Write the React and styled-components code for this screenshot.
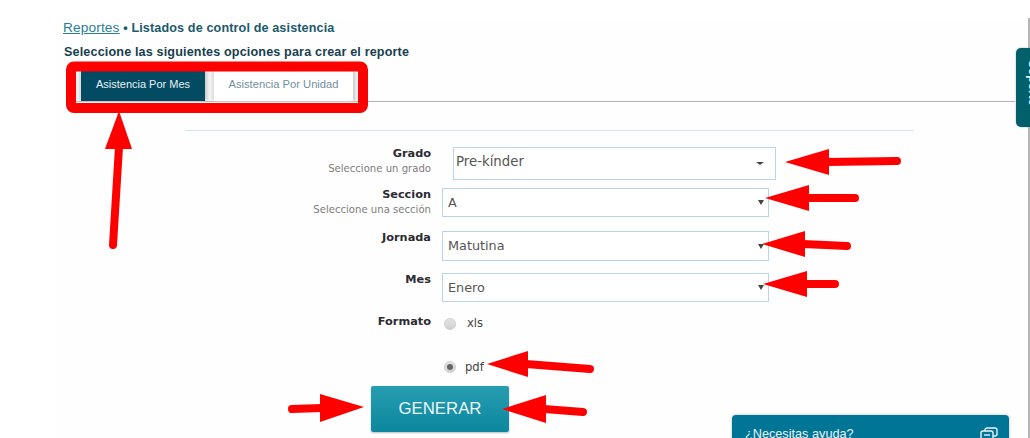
import React from "react";
import styled, { createGlobalStyle } from "styled-components";

const Global = createGlobalStyle`
  html, body {
    margin: 0;
    padding: 0;
    background: #fff;
    overflow: hidden;
  }
`;

const Page = styled.div`
  position: relative;
  width: 1030px;
  height: 438px;
  padding-top: 18px;
  box-sizing: border-box;
  overflow: hidden;
  background: #fff;
`;
const Panel = styled.div`
  margin-left: 55px;
  height: 420px;
  background: #fefefe;
  border-right: 2px solid #b5b5b5;
  box-sizing: border-box;
`;
const Head = styled.div`
  padding: 2px 0 0 8px;
`;
const Crumbs = styled.div`
  font: bold 12.6px/15px "Liberation Sans", Arial, sans-serif;
  color: #1b5a6b;
  letter-spacing: 0.13px;
  a {
    color: #2b7f92;
    font-weight: normal;
    font-size: 13.7px;
    text-decoration: underline;
  }
`;
const Lead = styled.div`
  margin: 9px 0 0 1px;
  font: bold 12.6px/15px "Liberation Sans", Arial, sans-serif;
  color: #173f50;
  letter-spacing: 0.15px;
`;
const TabBar = styled.div`
  display: flex;
  height: 30px;
  margin: 11px 13px 0 20px;
  border-bottom: 1px solid #b3b3b3;
  box-sizing: content-box;
`;
const Tab = styled.div`
  width: ${(p) => p.$w}px;
  margin-left: ${(p) => p.$gap}px;
  height: 30px;
  padding-bottom: 4px;
  box-sizing: border-box;
  display: flex;
  align-items: center;
  justify-content: center;
  font: ${(p) => (p.$on ? 11 : 11.2)}px "Liberation Sans", Arial, sans-serif;
  color: ${(p) => (p.$on ? "#e8f0f3" : "#6f8f9e")};
  background: ${(p) => (p.$on ? "#024b63" : "#fff")};
  box-shadow: 3px 0 3px #cfcfcf, -3px 0 3px #dedede;
`;
const Form = styled.div`
  width: 729px;
  margin: 28px 0 0 130px;
  border-top: 1px solid #cfe5ee;
  padding-top: 16px;
`;
const Row = styled.div`
  display: flex;
  height: ${(p) => p.$h}px;
`;
const Label = styled.div`
  width: 246px;
  text-align: right;
  font: bold 11.3px/14px "DejaVu Sans", Verdana, sans-serif;
  color: #2b2b33;
  padding-top: ${(p) => p.$top || 0}px;
  small {
    display: block;
    font: 10.1px/13px "DejaVu Sans", Verdana, sans-serif;
    color: #7d7d7d;
    margin-top: 1px;
  }
`;
const Field = styled.div`
  width: ${(p) => p.$w}px;
  height: ${(p) => p.$h}px;
  margin-left: ${(p) => p.$left}px;
  border: 1px solid #b7d7e8;
  box-sizing: border-box;
  display: flex;
  align-items: center;
  justify-content: space-between;
  padding: 0 ${(p) => p.$pr}px 0 ${(p) => p.$pl}px;
  background: #fff;
  font: ${(p) => p.$fs}px "DejaVu Sans", Verdana, sans-serif;
  color: #555;
`;
const Value = styled.span`
  margin-bottom: ${(p) => p.$lift || 0}px;
`;
const Caret = styled.span`
  width: 0;
  height: 0;
  border-left: ${(p) => p.$s}px solid transparent;
  border-right: ${(p) => p.$s}px solid transparent;
  border-top: ${(p) => p.$h}px solid #444;
`;
const Radio = styled.span`
  width: 12px;
  height: 12px;
  margin-left: 13px;
  margin-top: ${(p) => p.$top}px;
  border-radius: 50%;
  border: 1px solid #cfcfcf;
  background: linear-gradient(#e3e3e3, #d2d2d2);
  box-sizing: border-box;
  display: flex;
  align-items: center;
  justify-content: center;
  &::after {
    content: "";
    width: 6px;
    height: 6px;
    border-radius: 50%;
    background: ${(p) => (p.$on ? "#666" : "transparent")};
  }
`;
const RadioText = styled.span`
  margin-left: ${(p) => p.$left}px;
  margin-top: ${(p) => p.$top}px;
  font: 11.6px/16px "DejaVu Sans", Verdana, sans-serif;
  color: #444;
`;
const ButtonRow = styled.div`
  padding-left: 186px;
`;
const Generate = styled.button`
  width: 138px;
  height: 46px;
  border: none;
  border-radius: 2px;
  background: linear-gradient(#279db1, #0c879e);
  color: #eef7f9;
  font: 16.8px "Liberation Sans", Arial, sans-serif;
  box-shadow: 0 1px 2px #bbb;
`;
const Chat = styled.div`
  position: absolute;
  left: 732px;
  top: 415px;
  width: 277px;
  height: 40px;
  background: #017595;
  border-radius: 4px 4px 0 0;
  color: #e9f3f6;
  font: 12.7px "Liberation Sans", Arial, sans-serif;
  display: flex;
  justify-content: space-between;
  padding: 12px 11px 0 13px;
  box-sizing: border-box;
  box-shadow: 0 0 3px #bbb;
`;
const SideTab = styled.div`
  position: absolute;
  left: 1016px;
  top: 48px;
  width: 14px;
  height: 79px;
  background: #01606a;
  border-radius: 5px 0 0 5px;
  box-shadow: 0 0 2px #aaa;
  overflow: hidden;
`;
const SideLabel = styled.div`
  position: absolute;
  left: 7px;
  top: -5px;
  width: 20px;
  height: 79px;
  display: flex;
  align-items: center;
  justify-content: center;
  writing-mode: vertical-rl;
  color: #e6f6fb;
  font: bold 12px/20px "Liberation Sans", Arial, sans-serif;
`;
const Overlay = styled.svg`
  position: absolute;
  left: 0;
  top: 0;
  pointer-events: none;
`;

const rows = [
  { label: "Grado", hint: "Seleccione un grado", value: "Pre-kínder", h: 41, fw: 323, fh: 33, left: 22, pl: 2, pr: 11, cs: 4, ch: 3, fs: 13.3, lift: 4 },
  { label: "Seccion", hint: "Seleccione una sección", value: "A", h: 43, fw: 327, fh: 29, left: 11, pl: 5, pr: 4, cs: 3, ch: 5, fs: 12.8 },
  { label: "Jornada", value: "Matutina", h: 42, fw: 327, fh: 30, left: 11, pl: 5, pr: 4, cs: 3, ch: 5, fs: 12.8, lift: 2 },
  { label: "Mes", value: "Enero", h: 41, fw: 327, fh: 29, left: 11, pl: 5, pr: 4, cs: 3, ch: 5, fs: 12.8 },
];

// left pointing arrows: tip x, tip y, base x, half height, tail x, tail y
const arrows = [
  [785, 162, 829, 13, 897, 161],
  [765, 198, 809, 13, 855, 198],
  [762, 244, 805, 13, 847, 246],
  [763, 284, 807, 13, 835, 284],
  [487, 364, 528, 13, 590, 369],
  [502, 409, 546, 14, 583, 412],
];

const Arrow = ({ a }) => {
  const [tx, ty, bx, hh, ex, ey] = a;
  return (
    <g>
      <polygon points={`${tx},${ty} ${bx},${ty - hh} ${bx},${ty + hh}`} fill="#ff0000" />
      <line x1={bx - 2} y1={ty} x2={ex} y2={ey} stroke="#ff0000" strokeWidth="8" strokeLinecap="round" />
    </g>
  );
};

export default function App() {
  return (
    <Page>
      <Global />
      <Panel>
        <Head>
          <Crumbs>
            <a>Reportes</a> • Listados de control de asistencia
          </Crumbs>
          <Lead>Seleccione las siguientes opciones para crear el reporte</Lead>
        </Head>
        <TabBar>
          <Tab $on $w={124} $gap={6}>Asistencia Por Mes</Tab>
          <Tab $w={139} $gap={9}>Asistencia Por Unidad</Tab>
        </TabBar>
        <Form>
          {rows.map((r) => (
            <Row key={r.label} $h={r.h}>
              <Label $top={r.top}>
                {r.label}
                {r.hint && <small>{r.hint}</small>}
              </Label>
              <Field $w={r.fw} $h={r.fh} $left={r.left} $pl={r.pl} $pr={r.pr} $fs={r.fs}>
                <Value $lift={r.lift}>{r.value}</Value>
                <Caret $s={r.cs} $h={r.ch} />
              </Field>
            </Row>
          ))}
          <Row $h={41}>
            <Label $top={1}>Formato</Label>
            <Radio $top={4} />
            <RadioText $left={11} $top={1}>xls</RadioText>
          </Row>
          <Row $h={31}>
            <Label />
            <Radio $on $top={6} />
            <RadioText $left={9} $top={4}>pdf</RadioText>
          </Row>
          <ButtonRow>
            <Generate>GENERAR</Generate>
          </ButtonRow>
        </Form>
      </Panel>
      <SideTab>
        <SideLabel>Soporte</SideLabel>
      </SideTab>
      <Chat>
        <span>¿Necesitas ayuda?</span>
        <svg width="18" height="16" viewBox="0 0 18 16" fill="none" stroke="#e9f3f6" strokeWidth="1.4">
          <rect x="5" y="1" width="12" height="8" rx="2" />
          <rect x="1" y="4" width="12" height="9" rx="2" fill="#017595" />
          <line x1="4" y1="8" x2="10" y2="8" />
        </svg>
      </Chat>
      <Overlay width="1030" height="438" viewBox="0 0 1030 438">
        <rect x="71" y="66.5" width="292" height="41.5" rx="3" fill="none" stroke="#ff0000" strokeWidth="10" />
        {arrows.map((a) => (
          <Arrow key={a[1]} a={a} />
        ))}
        <polygon points="119,111 105,149 132,149" fill="#ff0000" />
        <line x1="119" y1="147" x2="113" y2="245" stroke="#ff0000" strokeWidth="8" strokeLinecap="round" />
        <polygon points="364,407 320,394 320,422" fill="#ff0000" />
        <line x1="322" y1="408" x2="292" y2="409" stroke="#ff0000" strokeWidth="8" strokeLinecap="round" />
      </Overlay>
    </Page>
  );
}
